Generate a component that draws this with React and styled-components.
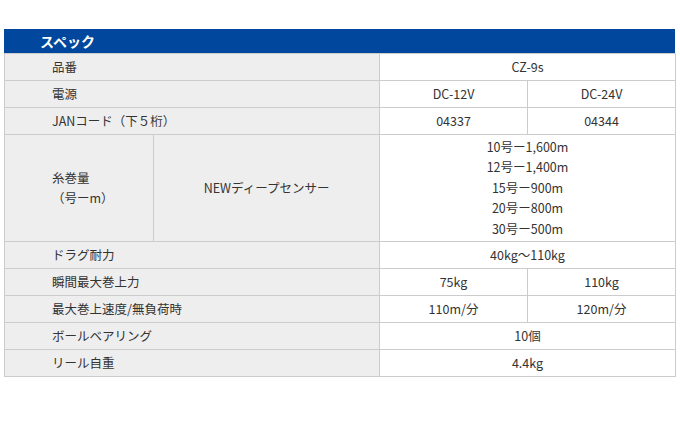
import React from "react";
import styled, { createGlobalStyle } from "styled-components";

const Global = createGlobalStyle`
  html, body { margin: 0; padding: 0; background: #fff; }
  body { font-family: "Noto Sans CJK JP", "Liberation Sans", sans-serif; }
`;

const Wrap = styled.div`
  padding: 29px 0 0 4px;
  width: 672px;
`;

const Header = styled.div`
  height: 24px;
  background: #00479d;
  color: #fff;
  font-weight: bold;
  font-size: 14px;
  line-height: 24px;
  padding-left: 36px;
  box-sizing: border-box;
  width: 671px;
`;

const Table = styled.table`
  border-collapse: collapse;
  width: 672px;
  table-layout: fixed;
  font-size: 12.5px;
  color: #333;
`;

const Row = styled.tr`
  height: 27px;
`;

const Label = styled.td`
  background: #eeeeee;
  border: 1px solid #cccccc;
  padding: 0 0 0 47px;
  text-align: ${(p) => (p.$center ? "center" : "left")};
  ${(p) => p.$center && "padding: 0;"}
  vertical-align: middle;
  line-height: 20px;
`;

const Value = styled.td`
  background: #fff;
  border: 1px solid #cccccc;
  text-align: center;
  vertical-align: middle;
  padding: 0;
  line-height: 20.5px;
`;

const rows = [
  { label: "品番", values: ["CZ-9s"] },
  { label: "電源", values: ["DC-12V", "DC-24V"] },
  { label: "JANコード（下５桁）", values: ["04337", "04344"] },
];

const rows2 = [
  { label: "ドラグ耐力", values: ["40kg〜110kg"] },
  { label: "瞬間最大巻上力", values: ["75kg", "110kg"] },
  { label: "最大巻上速度/無負荷時", values: ["110m/分", "120m/分"] },
  { label: "ボールベアリング", values: ["10個"] },
  { label: "リール自重", values: ["4.4kg"] },
];

const lines = ["10号ー1,600m", "12号ー1,400m", "15号ー900m", "20号ー800m", "30号ー500m"];

function SpecRow({ label, values }) {
  return (
    <Row>
      <Label colSpan={2}>{label}</Label>
      {values.length === 1 ? (
        <Value colSpan={2}>{values[0]}</Value>
      ) : (
        values.map((v) => <Value key={v}>{v}</Value>)
      )}
    </Row>
  );
}

export default function App() {
  return (
    <>
      <Global />
      <Wrap>
        <Header>スペック</Header>
        <Table>
          <colgroup>
            <col style={{ width: 149 }} />
            <col style={{ width: 226 }} />
            <col style={{ width: 148 }} />
            <col style={{ width: 148 }} />
          </colgroup>
          <tbody>
            {rows.map((r) => (
              <SpecRow key={r.label} {...r} />
            ))}
            <tr style={{ height: 107 }}>
              <Label>
                糸巻量
                <br />
                （号ーm）
              </Label>
              <Label $center>NEWディープセンサー</Label>
              <Value colSpan={2}>
                {lines.map((l) => (
                  <div key={l}>{l}</div>
                ))}
              </Value>
            </tr>
            {rows2.map((r) => (
              <SpecRow key={r.label} {...r} />
            ))}
          </tbody>
        </Table>
      </Wrap>
    </>
  );
}
